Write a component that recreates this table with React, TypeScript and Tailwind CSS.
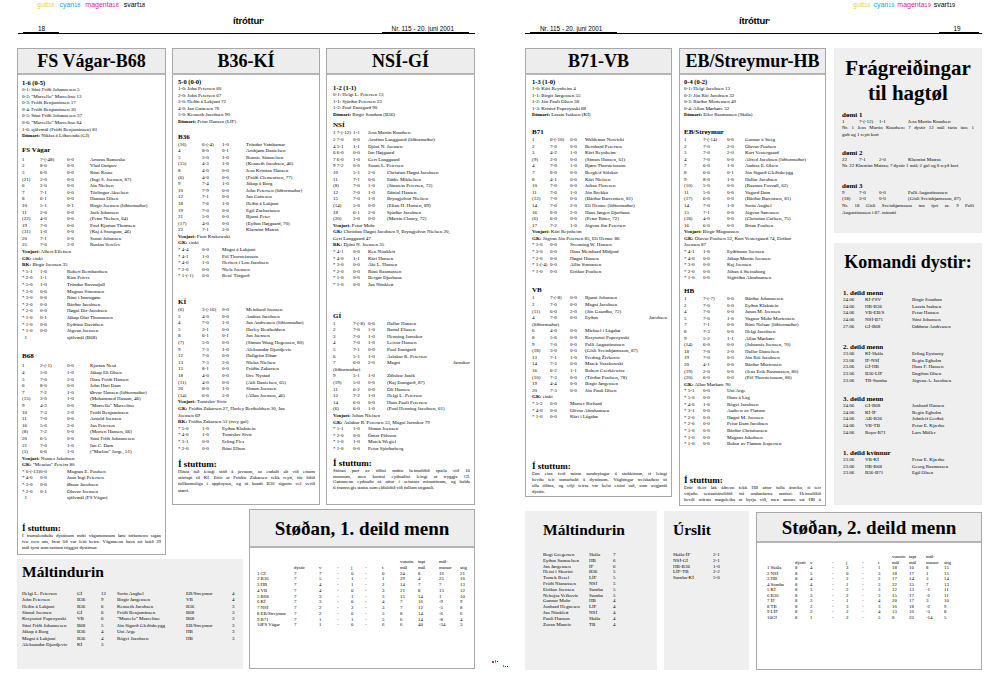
import React from 'react';

const small = 'text-[5px] leading-[6.6px] whitespace-nowrap';
const LABELS = ['Dómari', 'Venjari', 'GK', 'RK'];

function Rich({ text }: { text: string }) {
  const i = text.indexOf(':');
  const label = i > 0 ? text.slice(0, i) : '';
  if (LABELS.includes(label)) {
    return (
      <>
        <b>{label}:</b>
        {text.slice(i + 1)}
      </>
    );
  }
  return <>{text}</>;
}

// rows: "a|b|c|d" = player, "a|b|c" = shifted row (* subs), "text" = full line
function Rows({ cols, rows, className = '' }: { cols: string; rows: string[]; className?: string }) {
  return (
    <div className={`grid ${cols} ${small} ${className}`}>
      {rows.map((r, i) => {
        const c = r.split('|');
        if (c.length === 1)
          return (
            <div key={i} className="col-span-4">
              <Rich text={c[0]} />
            </div>
          );
        if (c.length === 3)
          return (
            <React.Fragment key={i}>
              <span>{c[0]}</span>
              <span>{c[1]}</span>
              <span className="col-span-2">{c[2]}</span>
            </React.Fragment>
          );
        return (
          <React.Fragment key={i}>
            <span>{c[0]}</span>
            <span>{c[1]}</span>
            <span>{c[2]}</span>
            {c[3].includes('~') ? (
              <span className="flex justify-between">
                {c[3].split('~').map((w) => (
                  <span key={w}>{w}</span>
                ))}
              </span>
            ) : (
              <span>{c[3]}</span>
            )}
          </React.Fragment>
        );
      })}
    </div>
  );
}

type BoxProps = {
  title: React.ReactNode;
  titleH?: string;
  titleSize?: string;
  className?: string;
  bodyClass?: string;
  children: React.ReactNode;
};

function Box({ title, titleH = 'h-[26px]', titleSize = 'text-[18px]', className = '', bodyClass = '', children }: BoxProps) {
  return (
    <div className={`flex flex-col overflow-hidden border border-[#a8a8a8] bg-white ${className}`}>
      <div
        className={`flex shrink-0 items-center justify-center border-b-2 border-[#b5b5b5] bg-[#ededed] font-bold leading-none ${titleH} ${titleSize}`}
      >
        {title}
      </div>
      <div className={`flex min-h-0 flex-1 flex-col ${bodyClass}`}>{children}</div>
    </div>
  );
}

const Score = ({ children }: { children: React.ReactNode }) => (
  <div className="text-[6.5px] font-bold leading-[8px]">{children}</div>
);

const Team = ({ children, className = '' }: { children: React.ReactNode; className?: string }) => (
  <div className={`text-[7px] font-bold leading-[9px] ${className}`}>{children}</div>
);

function Stuttum({ lines, className = '', lead = 'leading-[6px]', justifyAll = false }: { lines: string[]; className?: string; lead?: string; justifyAll?: boolean }) {
  return (
    <div className={`mt-auto ${className}`}>
      <div className="text-[9px] font-bold leading-[9px]">Í stuttum:</div>
      {lines.map((l, i) => (
        <div
          key={i}
          className={`text-[4.8px] whitespace-nowrap ${lead} ${i < lines.length - 1 || justifyAll ? 'text-justify [text-align-last:justify]' : ''}`}
        >
          {l}
        </div>
      ))}
    </div>
  );
}

function ColorBar({ n, className = '' }: { n: string; className?: string }) {
  const items = [
    ['gult', 'text-[#e6de00]'],
    ['cyan', 'text-[#1aa3df]'],
    ['magenta', 'text-[#e2198e]'],
    ['svart', 'text-black'],
  ];
  return (
    <div className={`flex h-[14px] text-[7px] leading-[10px] font-['Liberation_Sans',Arial,sans-serif] ${className}`}>
      {items.map(([w, c]) => (
        <span key={w} className={c}>
          {w}
          <span className="text-[5.5px]">{n}</span>
        </span>
      ))}
    </div>
  );
}

const Logo = () => (
  <span className="relative w-[31px] text-[9.5px] font-bold leading-[10px] tracking-[-0.2px] font-['Liberation_Sans',Arial,sans-serif]">
    ítróttur
    <span className="absolute right-[-1px] top-[4px] h-[1.5px] w-[1.5px] bg-[#2fa84f]" />
  </span>
);

/* ---------- data ---------- */

const c1 = 'grid-cols-[18px_27px_23px_minmax(0,1fr)]';
const c2 = 'grid-cols-[24px_20px_24px_minmax(0,1fr)]';
const c3 = 'grid-cols-[20px_15px_19px_minmax(0,1fr)]';
const c4 = 'grid-cols-[18px_20px_15px_minmax(0,1fr)]';
const c5 = 'grid-cols-[19px_24px_18px_minmax(0,1fr)]';

const fsvGoals = [
  '0-1: Súni Fríði Johannesen 5',
  '0-2: "Marcello" Marcelino 13',
  '0-3: Fróði Benjaminsen 17',
  '0-4: Fróði Benjaminsen 30',
  '0-5: Súni Fríði Johannesen 37',
  '0-6: "Marcello" Marcelino 64',
  '1-6: sjálvmál (Fróði Benjaminsen) 81',
  'Dómari: Niklas á Líðarenda (GÍ)',
];
const fsv = [
  '1|7-(-48)|0-0|Arturas Ramoska',
  '2|8-0|0-0|Vlad Ostipov',
  '5|6-0|0-0|Rúni Kruse',
  '(21)|2-0|0-0|(Ingi S. Joensen, 87)',
  '6|2-0|0-0|Jón Nielsen',
  '7|7-1|0-0|Tórlingur Akselsen',
  '8|6-1|0-0|Hannus Olsen',
  '10|5-1|0-1|Birgir Joensen (liðformaður)',
  '11|2-0|0-0|Jack Johansen',
  '(22)|4-0|0-0|(Petur Nielsen, 64)',
  '19|7-0|0-0|Poul Kjartan Thomsen',
  '(31)|1-0|0-0|(Kaj á Stongum, 46)',
  '20|7-1|0-0|Sonni Johansen',
  '25|7-0|2-0|Ruslan Serelev',
  'Venjari: Albert Ellefsen',
  'GK: einki',
  'RK: Birgir Joensen 35',
  '* 5-1|1-0|Robert Bernhardsen',
  '* 2-0|1-1|Kim Peters',
  '* 5-0|1-0|Tróndur Ravnsfjall',
  '* 3-0|0-0|Magnus Simonsen',
  '* 3-0|0-0|Rúni í Innrugøtu',
  '* 2-0|0-0|Bárður Jacobsen',
  '* 2-0|0-0|Høgni Dir-Jacobsen',
  '* 1-0|0-1|Jákup Ólaf Thomassen',
  '* 1-0|0-0|Eyðfinn Davidsen',
  '* 1-0|0-0|Jógvan Joensen',
  '\u00a0\u00a01||sjálvmál (B68)',
];
const b68 = [
  '1|2-(-1)|0-0|Kjartan Nesá',
  '4|5-0|1-0|Jákup Eli Olsen',
  '5|7-0|2-0|Hans Fróði Hansen',
  '6|8-0|0-0|John Hari Dam',
  '7|7-2|1-0|Ørvur Hansen (liðformaður)',
  '(15)|3-0|1-0|(Mohammed Hassan, 46)',
  '9|4-3|0-0|"Marcello" Marcelino',
  '10|7-3|2-0|Fróði Benjaminsen',
  '11|7-0|0-0|Arnold Joensen',
  '16|5-0|2-0|Jan Petersen',
  '(8)|7-2|0-0|(Morten Hansen, 66)',
  '20|6-5|0-0|Súni Fríði Johannesen',
  '21|7-0|1-0|Ian C. Dam',
  '(5)|6-0|1-0|("Marlon" Jorge, 51)',
  'Venjari: Nomes Jakobsen',
  'GK: "Messias" Pereira 80',
  '* 6-(-13)|0-0|Magnus E. Poulsen',
  '* 4-0|0-0|Jann Ingi Petersen',
  '* 3-0|0-0|Øssur Jacobsen',
  '* 2-0|0-1|Ólavur Joensen',
  '\u00a0\u00a01||sjálvmál (FS Vágar)',
];

const b36Goals = [
  '1-0: John Petersen 60',
  '2-0: John Petersen 67',
  '3-0: Heðin á Lakjuni 72',
  '4-0: Jan Guttesen 76',
  '5-0: Kenneth Jacobsen 90',
  'Dómari: Petur Hansen (LÍF)',
];
const b36 = [
  '(16)|6-(-4)|1-0|Tróndur Vatnhamar',
  '4|8-0|0-1|Arnbjørn Danielsen',
  '5|3-0|1-0|Ronnie Sámuelsen',
  '(15)|4-3|1-0|(Kenneth Jacobsen, 46)',
  '8|4-0|0-0|Jens Kristian Hansen',
  '(6)|4-0|0-0|(Fróði Clementsen, 77)',
  '9|7-4|1-0|Jákup á Borg',
  '10|7-9|0-0|John Petersen (liðformaður)',
  '12|7-1|0-0|Jan Guttesen',
  '18|7-6|1-0|Heðin á Lakjuni',
  '19|7-0|0-0|Egil Zachariasen',
  '21|5-0|0-0|Bjarni Peter',
  '(17)|4-0|0-0|(Eyðun Højgaard, 70)',
  '22|7-1|2-0|Klæmint Matras',
  'Venjari: Piotr Krakowski',
  'GK: einki',
  '* 4-4|0-0|Magni á Lakjuni',
  '* 4-1|1-0|Pól Thorsteinsson',
  '* 4-0|1-0|Herbert í Lon Jacobsen',
  '* 2-0|0-0|Niels Joensen',
  '* 1-(-1)|0-0|René Tórgarð',
];
const ki = [
  '(6)|3-(-16)|0-0|Meinhard Joensen',
  '3|4-0|0-0|Andras Jacobsen',
  '4|7-0|1-0|Jan Andreasen (liðformaður)',
  '5|3-1|0-0|Harley Bertholdsen',
  '8|6-1|0-1|Jan Joensen',
  '(7)|5-0|0-0|(Símun Waag Hogensen, 80)',
  '9|7-3|1-0|Aleksandar Djordjevic',
  '12|7-0|0-0|Hallgrím Elttør',
  '13|7-3|2-0|Niclas Nielsen',
  '15|8-1|0-0|Fróðin Zakarsen',
  '18|4-0|0-0|Ove Nystad',
  '(11)|4-0|0-0|(Atli Danielsen, 65)',
  '20|8-0|1-0|Símun Joensen',
  '(14)|6-0|2-0|(Allan Joensen, 46)',
  'Venjari: Tomislav Sivic',
  'GK: Fróðin Zakarsen 27, Harley Bertholdsen 30, Jan',
  'Joensen 69',
  'RK: Fróðin Zakarsen 52 (tvey gul)',
  '* 5-0|1-0|Eyðun Klakstein',
  '* 4-0|1-0|Tomislav Sivic',
  '* 3-1|0-0|Erling Fles',
  '* 2-0|0-0|Rúni Elbon',
];

const nsiGoals = ['0-1: Helgi L. Petersen 13', '1-1: Sjúrður Petersen 23', '1-2: Poul Ennigarð 90', 'Dómari: Birgir Sondum (B36)'];
const nsi = [
  '1 7-(-12)|1-1|Jens Martin Knudsen',
  '2 7-0|0-0|Arnfinn Langgaard (liðformaður)',
  '4 5-1|1-1|Djóni N. Joensen',
  '6 6-0|0-0|Ian Højgaard',
  '7 6-0|1-0|Gert Langgaard',
  '9 7-2|0-0|Sonni L. Petersen',
  '10|5-1|2-0|Christian Høgni Jacobsen',
  '11|7-1|0-0|Eddie Mikkelsen',
  '(8)|7-0|1-0|(Jónstein Petersen, 72)',
  '12|7-0|1-0|Dánial Hansen',
  '15|7-0|1-0|Bryngjolvur Nielsen',
  '(14)|5-0|0-0|(Elian H. Hansen, 89)',
  '18|6-1|2-0|Sjúrður Jacobsen',
  '(20)|2-0|0-0|(Martin Clancy, 72)',
  'Venjari: Petur Mohr',
  'GK: Christian Høgni Jacobsen 9, Bryngjolvur Nielsen 20,',
  'Gert Langgaard 47',
  'RK: Djóni N. Joensen 35',
  '* 4-1|0-0|Ken Nönklett',
  '* 4-0|1-1|Kári Hansen',
  '* 3-0|0-0|Áki L. Hansen',
  '* 2-0|0-0|Rúni Rasmussen',
  '* 1-0|0-0|Bergur Djurhuus',
  '* 1-0|0-0|Jan Nönklett',
];
const gi = [
  '1|7-(-8)|0-0|Hallur Hansen',
  '2|7-0|1-0|Bartal Eliasen',
  '3|7-0|1-0|Henning Jarnskor',
  '4|7-0|1-0|Leivur Hansen',
  '5|7-1|0-0|Poul Ennigarð',
  '6|5-1|1-0|Áslakur R. Petersen',
  '7|6-0|2-0|Magni~Jarnskor',
  '(liðformaður)',
  '9|5-1|1-0|Zdislaw Janik',
  '(19)|5-0|0-0|(Kaj Ennigarð, 87)',
  '11|6-2|0-0|Óli Hansen',
  '12|7-2|1-0|Helgi L. Petersen',
  '14|6-0|0-0|Hans Pauli Petersen',
  '(6)|6-0|1-0|(Poul Henning Jacobsen, 61)',
  'Venjari: Johan Nielsen',
  'GK: Áslakur R. Petersen 53, Magni Jarnskor 79',
  '* 5-1|1-0|Símun Joensen',
  '* 2-0|0-0|Ómar Pálsson',
  '* 1-0|1-0|Marek Wegiel',
  '* 1-0|0-0|Petur Sjúrðarberg',
];

const b71Goals = ['1-0: Kári Reynheim 4', '1-1: Birgir Jørgensen 55', '1-2: Jón Pauli Olsen 58', '1-3: Kristof Popczynski 88', 'Dómari: Lassin Isaksen (KÍ)'];
const b71 = [
  '1|6-(-10)|0-0|Waldemar Nowicki',
  '2|7-0|0-0|Bernhard Petersen',
  '3|4-2|1-0|Kári Reynheim',
  '(9)|2-0|0-0|(Símun Hansen, 61)',
  '4|7-0|1-0|Bjørn Thorsteinsson',
  '7|6-0|0-0|Bergleif Sólskor',
  '8|4-1|0-0|Kári Nielsen',
  '10|7-0|0-0|Julian Floresen',
  '11|7-0|1-0|Jón Brekku',
  '(12)|7-0|0-0|(Bárður Barrentsen, 81)',
  '14|7-0|2-0|Eli Hentze (liðformaður)',
  '16|6-0|2-0|Hans Jørgen Djurhuus',
  '(6)|6-0|0-0|(Petur Ritter, 72)',
  '17|7-2|1-0|Jógvan Jón Petersen',
  'Venjari: Kári Reynheim',
  'GK: Jógvan Jón Petersen 85, Eli Hentze 86',
  '* 5-0|0-0|Svenning W. Hansen',
  '* 3-0|0-0|Hans Meinhard Midjord',
  '* 2-0|0-0|Høgni Hansen',
  '* 1-(-4)|0-0|Allin Simonsen',
  '* 1-0|0-0|Eirikur Poulsen',
];
const vb = [
  '1|7-(-8)|0-0|Bjarni Johansen',
  '2|7-0|0-0|Magni Jacobsen',
  '(11)|6-0|2-0|(Jón Gaardbo, 72)',
  '4|7-0|0-0|Eyðun~Jacobsen',
  '(liðformaður)',
  '6|4-0|0-0|Michael í Lágabø',
  '8|5-6|0-0|Krzysztof Popczynski',
  '9|7-0|0-0|Palli Augustinussen',
  '(18)|3-0|0-0|(Gísli Sveinbjørnsson, 87)',
  '13|7-1|1-0|Predrag Živkovic',
  '14|7-3|0-0|Marek Vaszkowski',
  '16|6-2|1-1|Robert Czerkiewicz',
  '(10)|7-3|0-0|(Tórður Poulsen, 78)',
  '19|4-4|0-0|Birgir Jørgensen',
  '20|7-3|0-0|Jón Pauli Olsen',
  'GK: einki',
  '* 5-2|0-0|Marner Richard',
  '* 4-0|0-0|Olivur Abrahamsen',
  '* 1-0|0-0|Kári í Lágabø',
];

const ebGoals = ['0-1: Helgi Jacobsen 13', '0-2: Jón Rói Jacobsen 32', '0-3: Bárður Mortensen 49', '0-4: Allan Mørkøre 52', 'Dómari: Eiler Rasmussen (Skála)'];
const eb = [
  '1|7-(-14)|0-0|Gunnar á Steig',
  '2|7-0|2-0|Ólavur Poulsen',
  '3|7-0|2-0|Kurt Vestergaard',
  '4|7-0|0-0|Alfred Jacobsen (liðformaður)',
  '7|6-0|1-0|Andras E. Olsen',
  '8|6-0|0-1|Jón Sigurð Gleðisheygg',
  '9|8-0|1-0|Hallur Jacobsen',
  '(10)|5-0|0-0|(Rasmus Fosvøll, 62)',
  '11|5-0|0-0|Vagard Dam',
  '(17)|6-0|0-0|(Bárður Barentsen, 81)',
  '14|7-0|1-0|Sorin Anghel',
  '15|7-1|0-0|Jógvan Sørensen',
  '(18)|4-0|0-0|(Christian Carlsen, 75)',
  '16|6-0|0-0|Brian Poulsen',
  'Venjari: Birgir Magnussen',
  'GK: Ólavur Poulsen 52, Kurt Vestergaard 74, Eirikur',
  'Joensen 87',
  '* 4-1|1-0|Eyðfinnur Joensen',
  '* 4-0|0-0|Jákup Martin Joensen',
  '* 3-0|0-0|Kaj Joensen',
  '* 2-0|0-0|Jóhan á Steinaborg',
  '* 1-0|0-0|Sigfríður Abrahamsen',
];
const hb = [
  '1|7-(-7)|0-0|Bárður Johannesen',
  '2|7-0|0-0|Eyðun Klakstein',
  '4|7-0|0-0|Janus M. Joensen',
  '5|7-0|1-0|Vagnur Mohr Mortensen',
  '7|7-1|0-0|Rúni Nolsøe (liðformaður)',
  '8|7-3|0-0|Helgi Jacobsen',
  '9|5-2|1-1|Allan Mørkøre',
  '(14)|6-0|0-0|(Johannis Joensen, 70)',
  '18|7-0|2-0|Hallur Danielsen',
  '19|7-0|0-0|Jón Rói Jacobsen',
  '20|4-1|0-0|Bárður Mortensen',
  '(19)|2-0|0-0|(Jens Erik Rasmussen, 80)',
  '(20)|6-0|0-0|(Pól Thorsteinsson, 86)',
  'GK: Allan Mørkøre 90',
  '* 5-1|0-0|Uni Arge',
  '* 5-0|0-0|Hans á Lag',
  '* 4-0|1-0|Rógvi Jacobsen',
  '* 3-1|0-0|Andrew av Fløtum',
  '* 2-0|0-0|Høgni M. Joensen',
  '* 2-0|0-0|Petur Dam Jacobsen',
  '* 1-0|0-0|Bárður Christiansen',
  '* 1-0|0-0|Magnus Jakobsen',
  '* 1-0|0-0|Bokur av Fløtum Jespersen',
];

const st1 = [
  '1 GÍ|7|7|-|0|-|0|24|8|16|21',
  '2 B36|7|5|-|1|-|1|29|4|25|16',
  '3 HB|7|4|-|1|-|2|14|7|7|13',
  '4 VB|7|4|-|0|-|3|21|8|13|12',
  '5 B68|7|3|-|1|-|3|15|14|1|10',
  '6 KÍ|7|3|-|0|-|4|7|16|-9|9',
  '7 NSÍ|7|2|-|2|-|3|7|12|-5|8',
  '8 EB/Streymur|7|2|-|0|-|5|8|14|-6|6',
  '9 B71|7|1|-|1|-|5|6|14|-8|4',
  '10FS Vágar|7|1|-|0|-|6|6|40|-34|3',
];
const st2 = [
  '1 Skála|8|4|-|3|-|1|18|10|8|15',
  '2 NSÍ|8|5|-|0|-|3|18|17|1|15',
  '3 HB|8|4|-|2|-|2|17|14|3|14',
  '4 Sumba|8|4|-|1|-|3|22|15|7|13',
  '5 KÍ|8|3|-|2|-|3|12|13|-1|11',
  '6 B36|8|3|-|2|-|3|15|17|-2|11',
  '7 ÍF|8|3|-|1|-|4|20|17|3|10',
  '8 TB|8|2|-|3|-|3|16|18|-2|9',
  '9 LÍF|8|2|-|2|-|4|13|16|-3|8',
  '10GÍ|8|1|-|2|-|5|8|22|-14|5',
];

function Standings({ title, cols, titleH, className, bodyClass, lead, rows }: { title: string; cols: string; titleH: string; className: string; bodyClass: string; lead: string; rows: string[] }) {
  const h1 = ['', '', '', '', '', '', '', 'vunnin', 'tapt', 'mál-', ''];
  const h2 = ['', 'dystir', 'v', '-', 'j', '-', 't', 'mál', 'mál', 'munur', 'stig'];
  const cells = [h1, h2, ...rows.map((r) => r.split('|'))].flat();
  return (
    <Box title={title} titleH={titleH} titleSize="text-[19px]" className={className} bodyClass={bodyClass}>
      <div className={`grid ${cols} text-[4.8px] ${lead} whitespace-nowrap`}>
        {cells.map((c, i) => (
          <span key={i}>{c}</span>
        ))}
      </div>
    </Box>
  );
}

function Fixtures({ title, rows, className = '' }: { title: string; rows: string[]; className?: string }) {
  return (
    <div className={className}>
      <div className="text-[7px] font-bold leading-[8px]">{title}</div>
      <div className={`grid grid-cols-[22px_47px_minmax(0,1fr)] text-[5px] leading-[6.7px] whitespace-nowrap`}>
        {rows
          .flatMap((r) => r.split('|'))
          .map((c, i) => (
            <span key={i}>{c}</span>
          ))}
      </div>
    </div>
  );
}

const scorersLeft = [
  'Helgi L. Petersen|GÍ|12|Sorin Anghel|EB/Streymur|4',
  'John Petersen|B36|9|Birgir Jørgensen|VB|4',
  'Heðin á Lakjuni|B36|6|Kenneth Jacobsen|B36|3',
  'Sámal Joensen|GÍ|6|Fróði Benjaminsen|B68|3',
  'Krzysztof Popczynski|VB|6|"Marcelo" Marcelino|B68|3',
  'Súni Fríði Johannesen|B68|5|Jón Sigurð Gleðisheygg|EB/Streymur|3',
  'Jákup á Borg|B36|4|Uni Arge|HB|3',
  'Magni á Lakjuni|B36|4|Rógvi Jacobsen|HB|3',
  'Aleksandar Djordjevic|KÍ|3| | | ',
];
const scorersRight = [
  'Bogi Gregersen|Skála|7',
  'Eyðun Samuelsen|HB|6',
  'Jan Jørgensen|ÍF|6',
  'Heini í Skorini|B36|5',
  'Tomek Resel|LÍF|5',
  'Fróði Nianussen|NSÍ|5',
  'Eirikur Joensen|Sumba|5',
  'Nebojsa Velkovic|Sumba|5',
  'Gunnar Mohr|HB|4',
  'Jonhard Hegnesen|LÍF|4',
  'Jan Nönklett|NSÍ|4',
  'Pauli Hanson|Skála|4',
  'Zoran Mancic|TB|4',
];
const results = ['Skála-ÍF|2-1', 'NSÍ-GÍ|2-1', 'HB-B36|1-0', 'LÍF-TB|2-2', 'Sumba-KÍ|5-0'];

function Grid({ cols, rows, className = '' }: { cols: string; rows: string[]; className?: string }) {
  return (
    <div className={`grid ${cols} text-[5px] whitespace-nowrap ${className}`}>
      {rows
        .flatMap((r) => r.split('|'))
        .map((c, i) => (
          <span key={i}>{c}</span>
        ))}
    </div>
  );
}

/* ---------- pages ---------- */

function LeftPage() {
  return (
    <div className="flex w-[490px] shrink-0 flex-col">
      <ColorBar n="18" className="gap-[5px] pl-[37px]" />
      <div className="ml-[18px] flex h-[20px] w-[457px] items-end border-b border-black font-['Liberation_Sans',Arial,sans-serif]">
        <div className="-mb-px ml-[5px] h-[9px] w-[36px] border-b-2 border-black pl-[15px] text-[6.4px] leading-[7px]">18</div>
        <div className="mb-[2px] ml-[174px]">
          <Logo />
        </div>
        <div className="-mb-px ml-[119px] h-[9px] w-[87px] border-b-2 border-black pl-[10px] text-[6.4px] leading-[7px] whitespace-nowrap">
          Nr. 115 - 20. juni 2001
        </div>
      </div>
      <div className="ml-[17px] mt-[14px] grid grid-cols-[149px_71px_71px_149px] grid-rows-[457px_46px_110px] gap-x-[6px] gap-y-[4px]">
        <Box title="FS Vágar-B68" className="col-start-1 row-span-2 row-start-1" bodyClass="pl-[4px] pr-[4px] pt-[4px]">
          <Score>1-6 (0-5)</Score>
          <Rows cols={c1} rows={fsvGoals} />
          <Team className="mb-[2px] mt-[6px]">FS Vágar</Team>
          <Rows cols={c1} rows={fsv} />
          <Team className="mb-[2px] mt-[11px]">B68</Team>
          <Rows cols={c1} rows={b68} />
          <Stuttum
            className="pb-[3px]"
            lines={[
              'Í framalendaðu dystinum móti vágamonnum løtu toftamenn sigan',
              'ivu vera um, hvat lið var leitt betra. Vágamenn hava nú latið 29',
              'mál fyrst sum tættum triggjar dystirnar.',
            ]}
          />
        </Box>

        <Box title="B36-KÍ" className="col-span-2 col-start-2 row-start-1" bodyClass="pl-[5px] pr-[4px] pt-[3px]">
          <Score>5-0 (0-0)</Score>
          <Rows cols={c2} rows={b36Goals} />
          <Team className="mt-[7px]">B36</Team>
          <Rows cols={c2} rows={b36} />
          <Team className="mt-[18px]">KÍ</Team>
          <Rows cols={c2} rows={ki} />
          <Stuttum
            className="pb-[10px]"
            lead="leading-[6.3px]"
            lines={[
              'Hóast tað leingi stóð á javnum, so endaði alt við einum',
              'stórtapi til KÍ. Eftir at Fróðin Zakarsen fekk reytt, fór liðið',
              'fullkomuliga í upployssn, og tá kundi B36 sigurin vel verið',
              'størri.',
            ]}
          />
        </Box>

        <Box title="NSÍ-GÍ" className="col-start-4 row-start-1" bodyClass="pl-[6px] pr-[4px] pt-[9px]">
          <Score>1-2 (1-1)</Score>
          <Rows cols={c3} rows={nsiGoals} />
          <Team className="mt-[3px]">NSÍ</Team>
          <Rows cols={c3} rows={nsi} />
          <Team className="mt-[23px]">GÍ</Team>
          <Rows cols={c3} rows={gi} />
          <Stuttum
            className="pb-[13px]"
            lead="leading-[5.8px]"
            lines={[
              'Stóran part av tíðini máttu heimaliðið spæla við 10',
              'monnum, men kortini eydnaðist leingi at tryggja GÍ.',
              'Gøtumenn eydnaðu tó aftur í seinasta minuttinum, og halda',
              'tí framvegis status sum eldaliðið við fullum stigatali.',
            ]}
          />
        </Box>

        <div className="col-span-2 col-start-1 row-start-3 flex flex-col bg-[#efefef] pl-[5px] pt-[4px]">
          <div className="text-[15.5px] font-bold leading-[18px]">Máltindurin</div>
          <Grid cols="grid-cols-[55px_24px_16px_69px_46px_minmax(0,1fr)]" rows={scorersLeft} className="mt-[9.8px] leading-[6.4px]" />
        </div>

        <Standings
          title="Støðan, 1. deild menn"
          cols="grid-cols-[37px_25px_18px_14px_14px_17px_18px_18px_21px_21px_minmax(0,1fr)]"
          titleH="h-[38px]"
          className="col-span-2 col-start-3 row-span-2 row-start-2"
          bodyClass="pl-[7px] pt-[11px]"
          lead="leading-[5.75px]"
          rows={st1}
        />
      </div>
    </div>
  );
}

function RightPage() {
  return (
    <div className="flex w-[490px] shrink-0 flex-col">
      <ColorBar n="19" className="gap-[3px] pl-[343px]" />
      <div className="ml-[15px] flex h-[20px] w-[457px] items-end border-b border-black font-['Liberation_Sans',Arial,sans-serif]">
        <div className="-mb-px ml-[5px] h-[9px] w-[87px] border-b-2 border-black pl-[10px] text-[6.4px] leading-[7px] whitespace-nowrap">
          Nr. 115 - 20. juni 2001
        </div>
        <div className="mb-[2px] ml-[122px]">
          <Logo />
        </div>
        <div className="-mb-px ml-[170px] h-[9px] w-[40px] border-b-2 border-black pl-[15px] text-[6.4px] leading-[7px]">19</div>
      </div>
      <div className="ml-[15px] mt-[14px] flex w-[457px] flex-col">
        <div className="flex items-start">
          <Box title="B71-VB" className="h-[449px] w-[147px] shrink-0" bodyClass="pl-[6px] pr-[4px] pt-[3px]">
            <Score>1-3 (1-0)</Score>
            <Rows cols={c4} rows={b71Goals} />
            <Team className="mt-[9px]">B71</Team>
            <Rows cols={c4} rows={b71} />
            <Team className="mt-[11px]">VB</Team>
            <Rows cols={c4} rows={vb} />
            <Stuttum
              className="pb-[1px]"
              lines={[
                'Enn eina ferð mistu sandoyingar á stokkinum, tí leingi',
                'hevðu teir tamarhald á dystinum. Vágbingar treiskaðust tó',
                'alla tíðina, og vilji teirra var helst eisini tað, sum avgjørdi',
                'dystin.',
              ]}
            />
          </Box>
          <Box title="EB/Streymur-HB" className="ml-[7px] h-[458px] w-[147px] shrink-0" bodyClass="pl-[4px] pr-[4px] pt-[3px]">
            <Score>0-4 (0-2)</Score>
            <Rows cols={c5} rows={ebGoals} />
            <Team className="mt-[9px]">EB/Streymur</Team>
            <Rows cols={c5} rows={eb} />
            <Team className="mt-[5px]">HB</Team>
            <Rows cols={c5} rows={hb} />
            <Stuttum
              className="pb-[2.5px]"
              justifyAll
              lines={[
                'Eftir fleiri løk áðrenn fekk HB aftur fulla áravku, tí teir',
                'vitjaðu sensatiónsliðið frá undanfarna umfari. Heimaliðið',
                'hevði stórsta møguleika at byrja við, men annars sat HB á',
              ]}
            />
          </Box>
          <div className="ml-[8px] flex w-[148px] shrink-0 flex-col">
            <div className="flex h-[185px] flex-col bg-[#efefef] px-[8px] pt-[8px]">
              <div className="text-center text-[21px] font-bold leading-[25px]">
                Frágreiðingar
                <br />
                til hagtøl
              </div>
              <div className="mt-[4.5px] text-[7px] font-bold leading-[8px]">dømi 1</div>
              <Rows cols="grid-cols-[17px_20px_29px_minmax(0,1fr)]" rows={['1|7-(-12)|1-1|Jens Martin Knudsen']} />
              <div className="text-justify text-[4.9px] leading-[6.6px] [text-align-last:justify] whitespace-nowrap">
                Nr. 1 Jens Martin Knudsen; 7 dystir 12 mál farin inn; 1
              </div>
              <div className="text-[4.9px] leading-[6.6px]">gult og 1 reytt kort</div>
              <div className="mt-[10.4px] text-[7px] font-bold leading-[8px]">dømi 2</div>
              <Rows cols="grid-cols-[17px_20px_29px_minmax(0,1fr)]" rows={['22|7-1|2-0|Klæmint Matras']} />
              <div className="text-[4.9px] leading-[6.6px] whitespace-nowrap">Nr. 22 Klæmint Matras; 7 dystir 1 mál; 2 gul og 0 reyð kort</div>
              <div className="mt-[12px] text-[7px] font-bold leading-[8px]">dømi 3</div>
              <Rows
                cols="grid-cols-[17px_20px_29px_minmax(0,1fr)]"
                rows={['9|7-0|0-0|Palli Augustinussen', '(18)|3-0|0-0|(Gísli Sveinbjørnsson, 87)']}
              />
              <div className="text-justify text-[4.9px] leading-[6.6px] [text-align-last:justify] whitespace-nowrap">
                Nr. 18 Gísli Sveinbjørnsson inn fyri nr. 9 Palli
              </div>
              <div className="text-[4.9px] leading-[6.6px]">Augustinussen í 87. minutti</div>
            </div>
            <div className="mt-[10px] flex h-[262px] flex-col bg-[#efefef] px-[8px] pt-[8px]">
              <div className="text-center text-[18px] font-bold leading-[22px] whitespace-nowrap">Komandi dystir:</div>
              <div className="pl-[1px]">
                <Fixtures
                  className="mt-[16px]"
                  title="1. deild menn"
                  rows={[
                    '24.06|KÍ-FSV|Birgir Sondum',
                    '24.06|HB-B36|Lassin Isaksen',
                    '24.06|VB-EB/S|Petur Hansen',
                    '24.06|NSÍ-B71|Súni Johansen',
                    '27.06|GÍ-B68|Oddmar Andreasen',
                  ]}
                />
                <Fixtures
                  className="mt-[12.5px]"
                  title="2. deild menn"
                  rows={[
                    '23.06|KÍ-Skála|Erling Eysturoy',
                    '23.06|ÍF-NSÍ|Regin Egholm',
                    '23.06|GÍ-HB|Hans F. Hansen',
                    '23.06|B36-LÍF|Dagfinn Olsen',
                    '23.06|TB-Sumba|Jógvan A. Jacobsen',
                  ]}
                />
                <Fixtures
                  className="mt-[10.5px]"
                  title="3. deild menn"
                  rows={[
                    '24.06|GÍ-B68|Jonhard Hansen',
                    '24.06|KÍ-ÍF|Regin Egholm',
                    '24.06|AB-B36|Johnleif Gerðsá',
                    '24.06|VB-TB|Petur E. Kjærbo',
                    '24.06|Royn-B71|Lars Müller',
                  ]}
                />
                <Fixtures
                  className="mt-[12.5px]"
                  title="1. deild kvinnur"
                  rows={['23.06|VB-KÍ|Petur E. Kjærbo', '23.06|HB-B68|Georg Rasmussen', '23.06|B36-B71|Egil Olsen']}
                />
              </div>
            </div>
          </div>
        </div>

        <div className="mt-[5px] flex items-start">
          <div className="flex h-[159px] w-[132px] shrink-0 flex-col bg-[#efefef] pl-[18px] pt-[10px]">
            <div className="text-[15.5px] font-bold leading-[18px]">Máltindurin</div>
            <Grid cols="grid-cols-[46px_24px_minmax(0,1fr)]" rows={scorersRight} className="mt-[13px] leading-[5.8px]" />
          </div>
          <div className="ml-[7px] flex h-[159px] w-[85px] shrink-0 flex-col bg-[#efefef] pl-[9px] pt-[10px]">
            <div className="text-[15.5px] font-bold leading-[18px]">Úrslit</div>
            <Grid cols="grid-cols-[40px_minmax(0,1fr)]" rows={results} className="mt-[13px] leading-[5.8px]" />
          </div>
          <Standings
            title="Støðan, 2. deild menn"
            cols="grid-cols-[28px_15px_22px_14px_16px_16px_14px_17px_17px_18px_minmax(0,1fr)]"
            titleH="h-[30px]"
            className="ml-[7px] mt-[1px] h-[158px] w-[226px] shrink-0"
            bodyClass="pl-[10px] pt-[11px]"
            lead="leading-[5.55px]"
            rows={st2}
          />
        </div>
      </div>
    </div>
  );
}

export default function App() {
  return (
    <div className="flex h-[673px] w-[1000px] overflow-hidden bg-white text-black font-['Liberation_Serif','Times_New_Roman',serif]">
      <LeftPage />
      <div className="flex w-[20px] shrink-0 items-end justify-between px-[2px] pb-[6px]">
        <div className="mb-[4px] flex items-center gap-[1px]">
          <span className="h-[2px] w-[2px] bg-[#e2198e]" />
          <span className="h-[3px] w-[1px] bg-[#1aa3df]" />
          <span className="h-[1px] w-[1px] bg-black" />
        </div>
        <div className="flex items-center gap-[1px]">
          <span className="h-[2px] w-[1px] bg-[#1aa3df]" />
          <span className="h-[1px] w-[1px] bg-[#e2198e]" />
          <span className="h-[1px] w-[1px] bg-black" />
        </div>
      </div>
      <RightPage />
    </div>
  );
}
